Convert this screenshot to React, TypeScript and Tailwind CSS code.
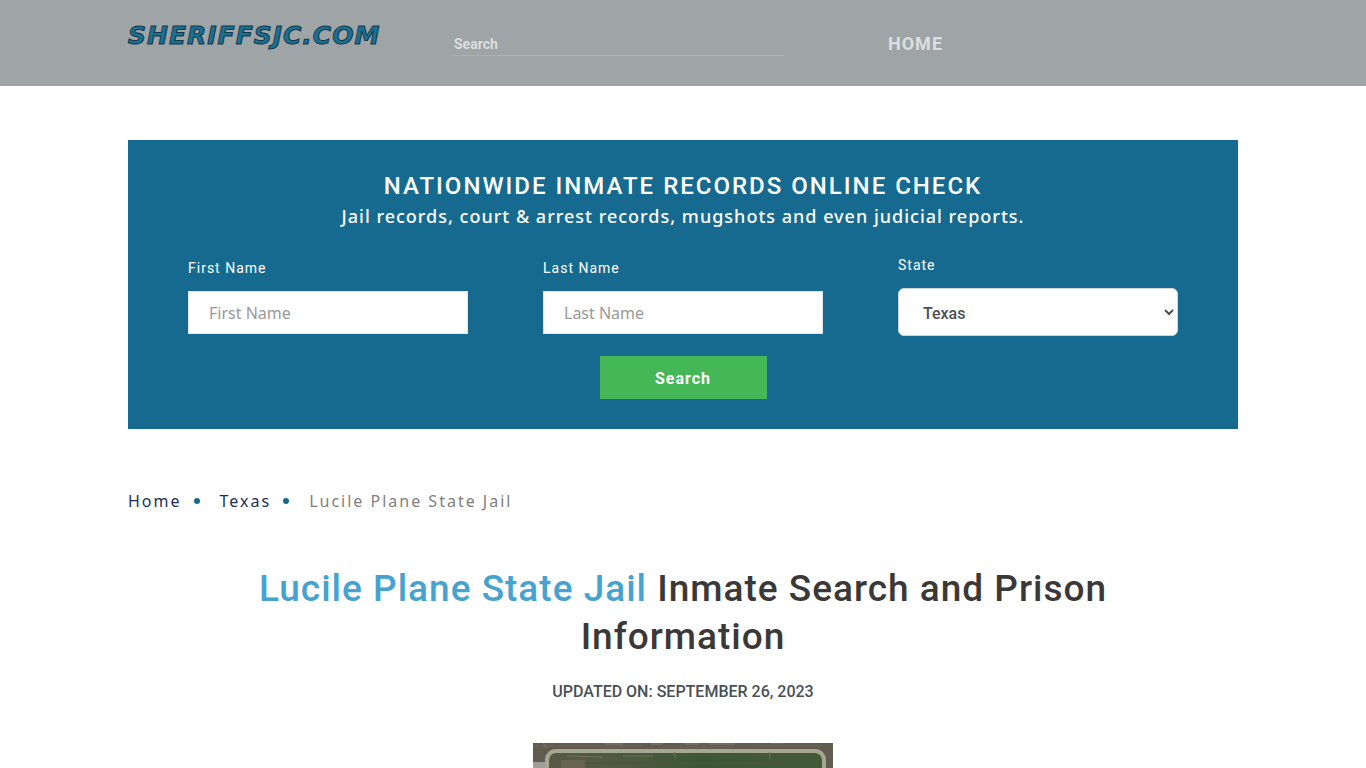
import clsx from 'clsx'
import { FC, useState } from 'react'

interface TextFieldProps {
  id: string
  label: string
  value: string
  onChange: (value: string) => void
}

const STATES = ['Texas', 'Alabama', 'California', 'Florida', 'Georgia', 'New York', 'Ohio']

const BREADCRUMBS = [
  { name: 'Home', href: '#home' },
  { name: 'Texas', href: '#texas' },
  { name: 'Lucile Plane State Jail' }
]

const Header = () => {
  return (
    <header className="h-[86px] border-b border-[#a3a2a8] bg-[#9fa4a6]">
      <div className="mx-auto grid max-w-[1140px] grid-cols-[325fr_435fr_350fr] px-[15px]">
        <a
          href="#home"
          className="pt-5 font-['DejaVu_Sans'] text-[25px] leading-8 font-bold tracking-[1px] text-[#1b6f92] italic [-webkit-text-stroke:1px_#12384a]"
        >
          SHERIFFSJC.COM
        </a>

        <form className="pt-8" onSubmit={e => e.preventDefault()}>
          <input
            type="search"
            aria-label="Search"
            placeholder="Search"
            className="block h-6 w-[331px] max-w-full border-b border-[#adb1b3] bg-transparent px-px text-sm font-bold text-[#dcdedf] outline-none placeholder:text-[#dcdedf]"
          />
        </form>

        <nav className="pt-8">
          <a href="#home" className="text-lg leading-6 font-bold tracking-[1px] text-[#dcdedf]">
            HOME
          </a>
        </nav>
      </div>
    </header>
  )
}

const TextField: FC<TextFieldProps> = ({ id, label, value, onChange }) => {
  return (
    <div className="flex flex-col gap-[11px]">
      <label htmlFor={id} className="text-sm leading-6 tracking-[1px]">
        {label}
      </label>
      <input
        id={id}
        type="text"
        placeholder={label}
        value={value}
        className="h-[43px] w-full border border-[#e5e5e5] bg-white px-5 pt-0.5 font-['Noto_Sans'] text-base text-[#495057] placeholder:text-[#999]"
        onChange={e => onChange(e.target.value)}
      />
    </div>
  )
}

const SearchForm = () => {
  const [firstName, setFirstName] = useState('')
  const [lastName, setLastName] = useState('')
  const [state, setState] = useState('Texas')

  return (
    <section className="bg-[#166a8f] px-[60px] py-[30px] text-white">
      <h2 className="text-center text-2xl leading-8 font-medium tracking-[2px]">
        NATIONWIDE INMATE RECORDS ONLINE CHECK
      </h2>
      <p className="text-center font-['Noto_Sans'] text-lg leading-7 font-medium tracking-[1px]">
        Jail records, court &amp; arrest records, mugshots and even judicial reports.
      </p>

      <form className="mt-[23px]" onSubmit={e => e.preventDefault()}>
        <div className="grid grid-cols-3 items-center gap-[75px]">
          <TextField id="first-name" label="First Name" value={firstName} onChange={setFirstName} />
          <TextField id="last-name" label="Last Name" value={lastName} onChange={setLastName} />

          <div className="flex flex-col gap-[11px]">
            <label htmlFor="state" className="text-sm leading-6 tracking-[1px]">
              State
            </label>
            <select
              id="state"
              value={state}
              className="h-12 w-full rounded-md border border-[#ced4da] bg-white px-5 pt-0.5 text-base font-medium text-[#495057]"
              onChange={e => setState(e.target.value)}
            >
              {STATES.map(name => (
                <option key={name} value={name}>
                  {name}
                </option>
              ))}
            </select>
          </div>
        </div>

        <button
          type="submit"
          className="mx-auto mt-5 block h-[43px] w-[167px] bg-[#45b757] pt-0.5 text-base font-bold tracking-[1px]"
        >
          Search
        </button>
      </form>
    </section>
  )
}

const Breadcrumb = () => {
  return (
    <nav aria-label="Breadcrumb" className="mt-[60px]">
      <ol className="flex font-['Noto_Sans'] text-base leading-6 tracking-[2px]">
        {BREADCRUMBS.map((row, index) => (
          <li
            key={row.name}
            className={clsx('flex items-center', row.href ? 'text-[#1d2f55]' : 'text-[#808080]')}
          >
            {index > 0 && <span className="mr-5 ml-3 size-1.5 rounded-full bg-[#166a8f]" />}
            {row.href ? <a href={row.href}>{row.name}</a> : row.name}
          </li>
        ))}
      </ol>
    </nav>
  )
}

// Aerial view of the facility: fields, perimeter road and the yard inside it
const AerialPhoto = () => {
  return (
    <svg
      role="img"
      aria-label="Lucile Plane State Jail"
      viewBox="0 0 300 200"
      className="mx-auto mt-[39px] block w-[300px]"
    >
      <defs>
        <linearGradient id="yard" x1="0" x2="1" y1="0" y2="0">
          <stop offset="0" stopColor="#5a5a48" />
          <stop offset="0.35" stopColor="#4a5a3c" />
          <stop offset="0.55" stopColor="#3a5733" />
          <stop offset="1" stopColor="#445a38" />
        </linearGradient>
      </defs>
      <rect width="300" height="200" fill="#625c50" />
      <path d="M0 3h110M130 4h70M220 3h70" stroke="#6d675a" />
      <path d="M10 0l4 5M72 1h18M118 1h12M152 1h14M176 1h26M238 0h14" stroke="#857d6e" />
      <path d="M0 19h12v14H0z" fill="#a09c98" />
      <rect x="14" y="8" width="277" height="184" rx="9" fill="url(#yard)" stroke="#a6a991" strokeWidth="4" />
      <path d="M22 12h262M30 20h250" stroke="#4d5441" />
      <path d="M34 13l36 1M90 13h30M142 9v6M237 9v7" stroke="#6f745d" />
      <path d="M28 17h24v8H28z" fill="#68634f" />
    </svg>
  )
}

export default function App() {
  return (
    <div className="bg-white font-[Roboto,sans-serif]">
      <Header />

      <main className="mx-auto max-w-[1140px] px-[15px] pt-[54px]">
        <SearchForm />
        <Breadcrumb />

        <h1 className="mx-auto mt-[52px] max-w-[925px] text-center text-[37px] leading-[48px] font-medium tracking-[1px] text-[#3b3838]">
          <span className="text-[#46a3d0]">Lucile Plane State Jail</span> Inmate Search and Prison
          Information
        </h1>
        <p className="mt-[19px] text-center text-base leading-6 font-medium text-[#495057]">
          UPDATED ON: SEPTEMBER 26, 2023
        </p>
        <AerialPhoto />
      </main>
    </div>
  )
}
